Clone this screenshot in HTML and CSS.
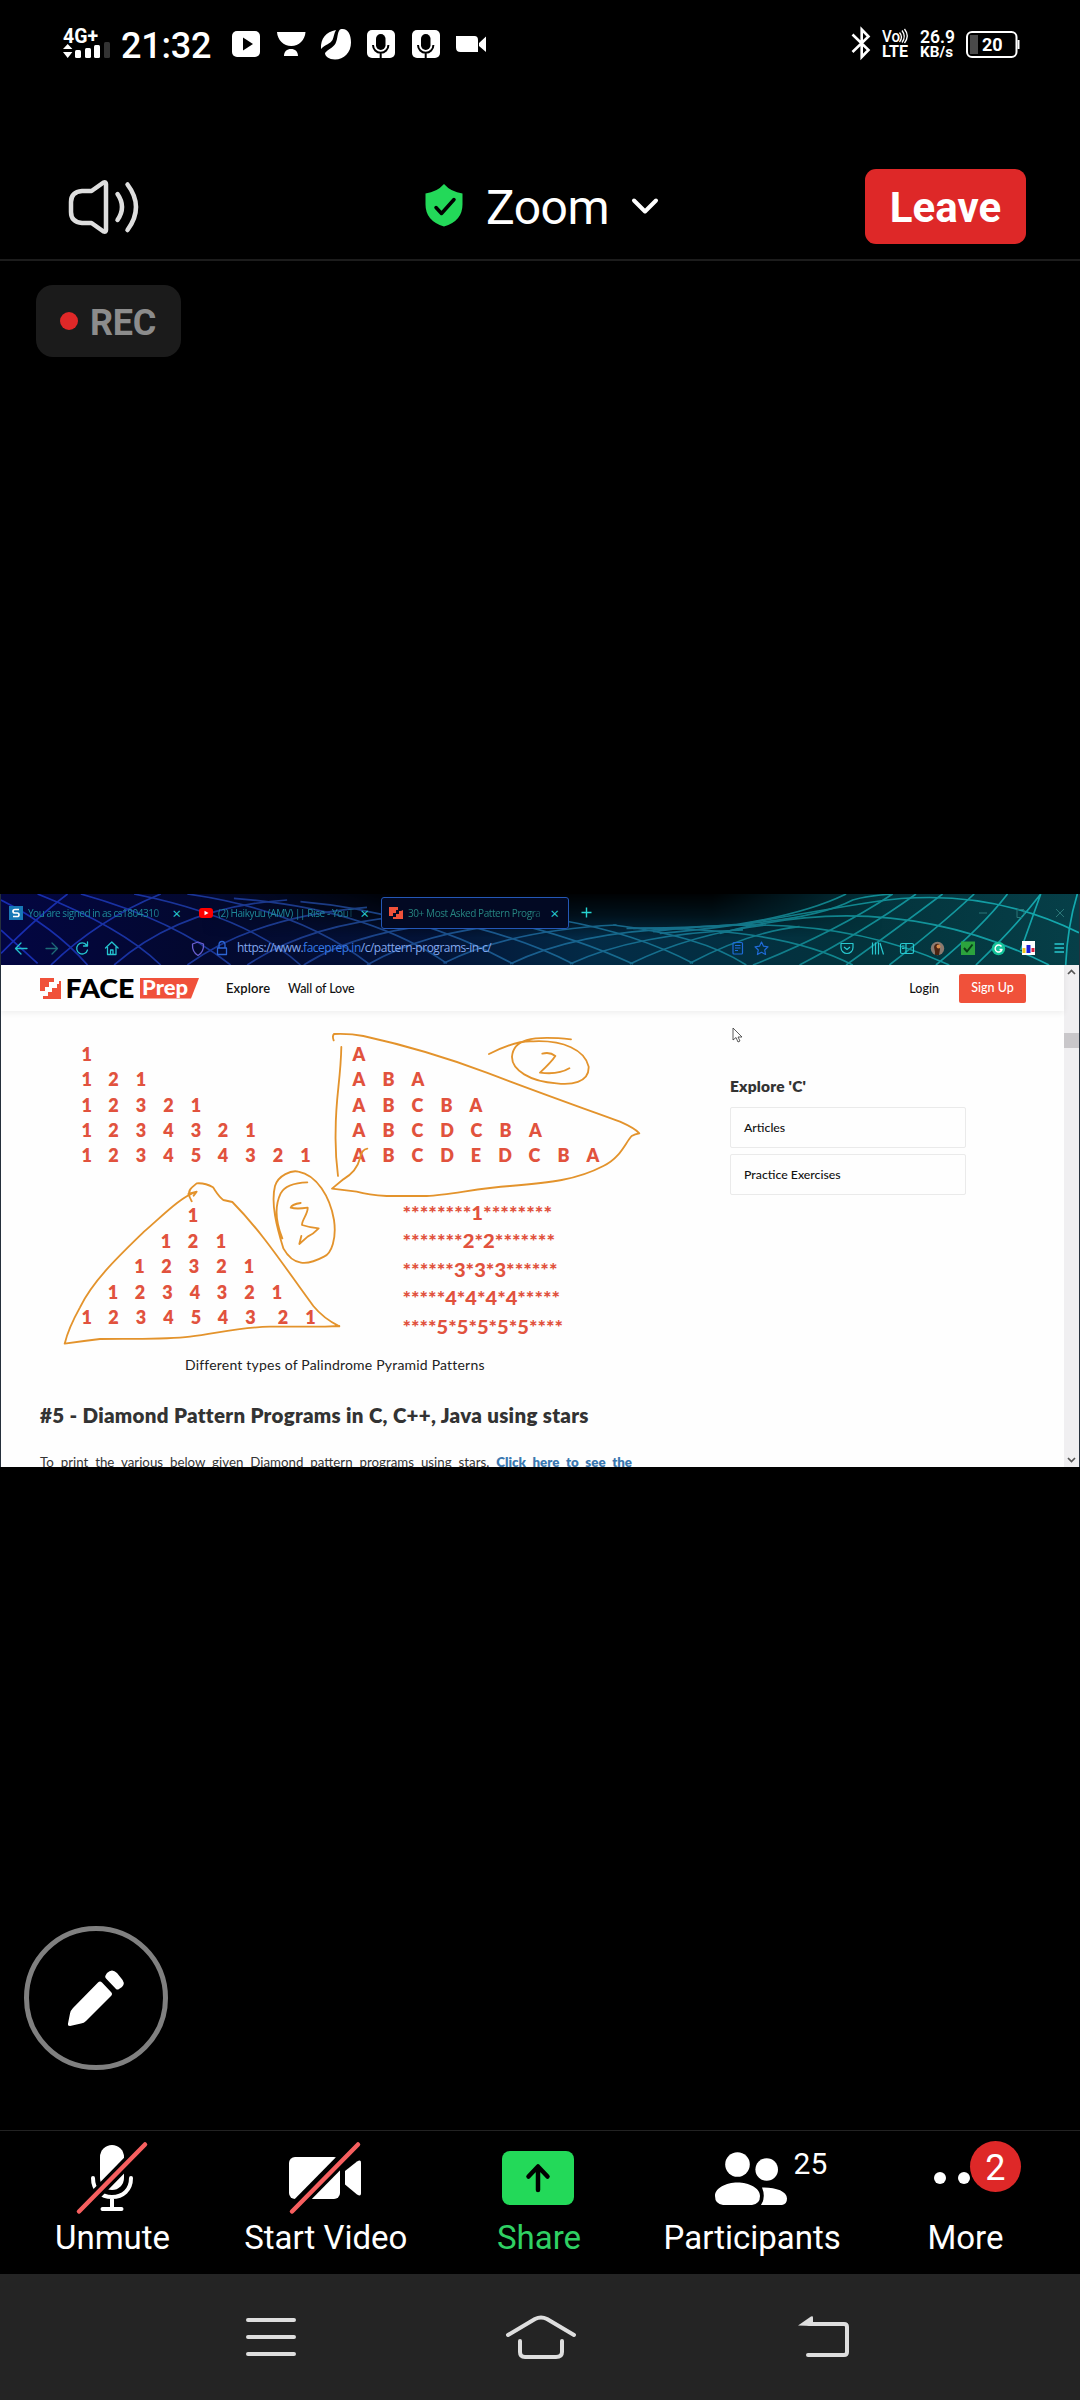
FILE: index.html
```html
<!DOCTYPE html>
<html lang="en">
<head>
<meta charset="utf-8">
<title>Zoom</title>
<link rel="stylesheet" href="styles.css">
</head>
<body>
<div class="statusbar">
  <svg class="signal" width="48" height="36" viewBox="63 24 48 36"><text x="63" y="43" font-size="20" font-weight="700" textLength="35" lengthAdjust="spacingAndGlyphs" fill="#fff">4G+</text><path fill="#fff" d="M63 49l4.700-5 4.700 5zM63 52h9.400l-4.700 6z"/><rect x="75" y="50" width="6" height="8" rx="1.500" fill="#fff"/><rect x="85" y="48" width="6" height="10" rx="1.500" fill="#fff"/><rect x="94" y="45" width="6" height="13" rx="1.500" fill="#fff"/><rect x="104" y="42" width="6" height="16" rx="1.500" fill="#333"/></svg>
  <span class="clock">21:32</span>
  <svg class="notifs" width="256" height="32" viewBox="231 28 256 32">
    <rect x="232" y="31" width="28" height="26" rx="5" fill="#fff"/><path d="M243 37.500l10 6.500-10 6.500z"/>
    <path fill="#fff" d="M277 32h28.500c-.5 8-6.500 14-14.200 14S277.500 40 277 32zM284 56c0-4.500 3-7 7-7s7 2.500 7 7z"/>
    <path fill="#fff" d="M336 30c-10 2-15.500 8-15 19 5-5 9-5 11.500-9 1.500-3 1.500-7 3.500-10z"/><path fill="#fff" d="M340 29.500c7-2 11 4 11 13 0 10-7 17-16 17-6 0-10-3-10-6.500 3-4 8-5 10.500-9.500 2.500-5 1.500-11 4.500-14z"/>
    <g id="micbox"><rect x="367" y="30" width="28" height="28" rx="5" fill="#fff"/><rect x="376" y="34" width="9.500" height="16" rx="4.700"/><path d="M373 45a7.700 7.700 0 0 0 15.400 0M380.700 52v6" fill="none" stroke="#000" stroke-width="2"/></g>
    <use href="#micbox" x="45"/>
    <path fill="#fff" d="M456 36h18.500q3.500 0 3.500 4v12h-17.500q-4.500 0-4.500-4.500zM479 43l7-6.500v15.500l-7-6z"/>
  </svg>
  <div class="status-right">
    <svg width="20" height="36" viewBox="851 26 20 36"><path d="M852.500 34.500l16 15.500-6.800 7V29.500l6.800 7-16 15.500" fill="none" stroke="#fff" stroke-width="2.600"/></svg>
    <svg width="28" height="36" viewBox="880 26 28 36" fill="#fff"><text x="881" y="42" font-size="16" font-weight="500" textLength="18" lengthAdjust="spacingAndGlyphs">Vo</text><text x="881" y="57" font-size="16" font-weight="700" textLength="26" lengthAdjust="spacingAndGlyphs">LTE</text><path d="M898.500 32.500q4 4.500 0 9.500M901 30.500q4.500 6 0 12M903.500 29q5.500 7 0 14" fill="none" stroke="#fff" stroke-width="1.300"/></svg>
    <svg width="37" height="36" viewBox="919 26 37 36" fill="#fff"><text x="920" y="42.500" font-size="18" font-weight="600" textLength="35" lengthAdjust="spacingAndGlyphs">26.9</text><text x="920" y="57" font-size="15.500" font-weight="700" textLength="33" lengthAdjust="spacingAndGlyphs">KB/s</text></svg>
    <svg width="55" height="36" viewBox="966 27 55 36"><rect x="967" y="33" width="49.500" height="25" rx="5" fill="none" stroke="#fff" stroke-width="2"/><rect x="970" y="36" width="8" height="19" fill="#4a4a4a"/><path d="M1018.500 41v9" stroke="#fff" stroke-width="2"/><text x="982" y="52" font-size="18" font-weight="700" fill="#fff">20</text></svg>
  </div>
</div>

<header class="meeting-bar">
  <svg class="speaker" width="72" height="58" viewBox="68 178 72 58" fill="none" stroke="#dedede" stroke-width="4.500" stroke-linecap="round" stroke-linejoin="round"><path d="M82 191h9.500l12-8.500q2.500-1 2.500 1.500v46q0 2.500-2.500 1.500l-12-8.500H82q-11-1-11-11V202q0-10 11-11z"/><path d="M117.500 194q9 13 0 26M127.500 184.500q17 22.500 0 45.500"/></svg>
  <div class="topic">
    <svg width="39" height="44" viewBox="425 185 39 44"><path fill="#23d959" d="M444 185q7 8 18.500 9.500v11q0 16.500-18.500 22-18.500-5.500-18.500-22v-11Q437 193 444 185z"/><path d="M436 208.500l5.500 6 12.500-14" fill="none" stroke="#000" stroke-width="3.500" stroke-linecap="round" stroke-linejoin="round"/></svg>
    <span class="topic-name">Zoom</span>
    <svg width="28" height="18" viewBox="0 0 28 18"><path d="M3 3.500l11 11 11-11" fill="none" stroke="#fff" stroke-width="4" stroke-linecap="round" stroke-linejoin="round"/></svg>
  </div>
  <button class="leave">Leave</button>
</header>

<main class="stage">
  <div class="rec"><i></i><span>REC</span></div>

  <section class="shared">
    <div class="chrome">
      <svg class="mesh" viewBox="0 42 3240 213" preserveAspectRatio="none">
        <defs>
          <linearGradient id="bg" x1="0" x2="1"><stop offset="0" stop-color="#030642"/><stop offset=".18" stop-color="#03082f"/><stop offset=".4" stop-color="#031337"/><stop offset=".55" stop-color="#032b46"/><stop offset=".8" stop-color="#03333c"/><stop offset="1" stop-color="#063f48"/></linearGradient>
          <linearGradient id="ln" gradientUnits="userSpaceOnUse" x1="0" x2="3240" y1="0" y2="0"><stop offset="0" stop-color="#1d36cf"/><stop offset=".3" stop-color="#22489e"/><stop offset=".5" stop-color="#1f6fa2"/><stop offset=".75" stop-color="#14969f"/><stop offset="1" stop-color="#18c6ca"/></linearGradient>
          <linearGradient id="sh" x1="0" x2="0" y1="0" y2="1"><stop offset="0" stop-color="#000" stop-opacity=".95"/><stop offset=".5" stop-color="#000" stop-opacity=".6"/><stop offset="1" stop-color="#000" stop-opacity="0"/></linearGradient>
          <linearGradient id="fd" x1="0" x2="1"><stop offset="0" stop-color="#fff" stop-opacity="0"/><stop offset=".3" stop-color="#fff"/><stop offset=".75" stop-color="#fff"/><stop offset="1" stop-color="#fff" stop-opacity="0"/></linearGradient>
          <mask id="mk"><rect x="600" y="42" width="2050" height="130" fill="url(#fd)"/></mask>
        </defs>
        <rect y="42" width="3240" height="213" fill="url(#bg)"/>
        <rect x="600" y="42" width="2050" height="130" fill="url(#sh)" mask="url(#mk)"/>
        <g id="wires" fill="none" stroke="url(#ln)">
          <path d="M0 150L110 250M0 60Q160 140 260 255M110 42Q360 140 480 255M240 42Q520 120 690 255M400 42Q740 110 900 255M560 42Q900 90 1110 255M700 55Q1100 85 1340 250M900 65Q1250 95 1540 252M1150 95Q1480 130 1720 252M1400 100Q1680 150 1900 252M1680 120Q1910 160 2080 250M1840 135Q2100 165 2240 255"/>
          <path d="M0 220Q110 110 200 42M150 255Q290 120 480 42M340 255Q540 80 860 60M560 255Q760 110 1100 82M740 255Q920 135 1200 110M910 255Q1080 145 1400 125M1100 255Q1300 140 1600 130M1330 250Q1530 150 1850 135M1530 252Q1730 155 2050 145M1710 252Q1910 160 2230 150M1890 252Q2080 160 2300 135M2070 250Q2250 155 2400 140"/>
          <path d="M1880 145Q2400 145 2560 60Q2600 48 2680 42M1980 160Q2360 130 2540 42M2260 255Q2500 160 2680 42M2400 255Q2600 150 2750 42M2540 255Q2700 140 2830 42M2670 255Q2820 140 2925 42M2810 255Q2950 140 3025 42M2930 255Q3050 140 3125 42M3065 210L3125 42M3200 255Q3205 140 3235 42"/>
          <path d="M2240 130Q2500 85 2620 66Q2950 15 3240 158M2160 160Q2680 20 3150 255M1960 155Q2480 85 2850 255M1900 145Q2340 140 2560 255"/>
        </g>
      </svg>

      <div class="tabs">
        <div class="tab tab-first"><svg width="14" height="14" viewBox="0 0 14 14"><rect width="14" height="14" fill="#1778b6"/><path d="M10 3.500H6q-2 0-2 1.700T6 7h2.300q1.700 0 1.700 1.800T8 10.500H4" fill="none" stroke="#fff" stroke-width="1.700"/></svg><span class="tab-title">You are signed in as cs1804310</span><b class="x">×</b></div>
        <div class="tab tab-second"><svg width="14" height="14" viewBox="0 0 14 14"><rect y="2" width="14" height="10" rx="3" fill="#f00"/><path d="M5.500 4.700L9.500 7l-4 2.300z" fill="#fff"/></svg><span class="tab-title">(2) Haikyuu (AMV) || Rise - YouT</span><b class="x">×</b></div>
        <div class="tab tab-active"><svg width="14" height="14" viewBox="0 0 14 14"><path fill="#f0513a" d="M0 1h9v3H7v3H4v3H0zM14 4v9H4v-2h3V8h3V5h2z"/></svg><span class="tab-title">30+ Most Asked Pattern Progra</span><b class="x">×</b></div>
        <svg class="plus" width="11" height="11" viewBox="0 0 11 11"><path d="M5.500.5v10M.5 5.500h10" stroke="#27d5d3" stroke-width="1.400"/></svg>
        <svg class="winctl" width="88" height="12" viewBox="0 0 88 12" fill="none" stroke="#2b7778" stroke-width="1"><path d="M1 6h8M39 2.500h7M39 2.500v8h5M46 3v5M78 2l8 8M86 2l-8 8"/></svg>
      </div>

      <div class="navrow">
        <svg class="navicons" width="230" height="18" viewBox="0 939 230 18" fill="none" stroke="#24c4cf" stroke-width="1.300" stroke-linecap="round" stroke-linejoin="round"><path d="M27 948.500H16M21 943l-5.500 5.500 5.500 5.500"/><path stroke="#1d6b78" d="M46 948.500h11M52 943l5.500 5.500-5.500 5.500"/><path d="M86.500 945a5.500 5.500 0 1 0 1 5M87.500 942v4h-4"/><path d="M105.500 948l6.300-6 6.300 6M107.500 947v7.500h8.500V947M110.500 954v-4h2.500v4"/><path stroke="#6a5fd0" d="M198 942l5.500 2q.5 8-5.500 11.500-6-3.500-5.500-11.500z"/><path stroke="#2c65d4" d="M217.500 948h9v6.500h-9zM219 948v-3a3 3.500 0 0 1 6 0v3"/></svg>
        <span class="url">https://www.<em>faceprep.in</em>/c/pattern-programs-in-c/</span>
        <svg class="extras" width="340" height="18" viewBox="730 939 340 18" fill="none" stroke="#28c8cf" stroke-width="1.200" stroke-linejoin="round"><g stroke="#1f6bd8"><rect x="733" y="942.500" width="9.500" height="11.500" rx="1"/><path d="M735 945.500h5.500M735 948h5.500M735 950.500h3M761.500 942l2 4.200 4.500.6-3.300 3.200.9 4.500-4.100-2.200-4.100 2.200.9-4.500-3.300-3.200 4.500-.6z"/></g><path d="M841 943.500h12v4a6 6 0 0 1-12 0zM844 947l3 2.500 3-2.500M872.500 942.500v12M875.500 942.500v12M878.500 942.500v12M880 943l3.500 11.500"/><rect x="900.500" y="943.500" width="13" height="10" rx="1.500"/><path d="M906 943.500v10M902 946h2.500M902 948.500h2.500"/>
        <g stroke="none"><circle cx="937.500" cy="948.500" r="6.700" fill="#8a7a70"/><path d="M935 955v-3l-1-5q1-4 5-3l1 5-1 6z" fill="#4b2412"/><circle cx="938.500" cy="946.500" r="2" fill="#d58c4d"/><rect x="961" y="941.500" width="14" height="13.500" fill="#2ca33d"/><circle cx="998.500" cy="948.500" r="6.700" fill="#15c39a"/><rect x="1022" y="941" width="13" height="14" fill="#fff"/><path d="M1022.500 948h3v5h-3z" fill="#f3c51c"/><path d="M1026.500 945h4v8h-4z" fill="#1e20d8"/><path d="M1031.500 948h3v4h-3z" fill="#dd2240"/></g><path d="M964 948l3 3.500 5.500-7" stroke="#083d18" stroke-width="2"/><path d="M1001.500 946.500a3.500 3.500 0 1 0 .5 3h-2.500" stroke="#fff" stroke-width="1.400"/><path d="M1054.500 944h9.500M1054.500 948h9.500M1054.500 952h9.500" stroke-width="1.500"/></svg>
      </div>
    </div>

    <div class="page">
      <div class="page-main">
        <div class="site-head">
          <svg class="logo" width="162" height="30" viewBox="39 973 162 30"><path fill="#f0513a" d="M40 978h14v4h-5v5h-4v4h-5zM61 981v18H43v-3h5v-4h4v-4h5v-4h2v-3z"/><text x="65.500" y="998" font-family="Lato" font-size="27" font-weight="900" textLength="69" lengthAdjust="spacingAndGlyphs">FACE</text><path fill="#f0513a" d="M140 978h59l-8 20.500h-51z"/><text x="142" y="995" font-family="Lato" font-size="20" font-weight="900" fill="#fff" textLength="46" lengthAdjust="spacingAndGlyphs">Prep</text></svg>
          <a class="link-explore">Explore</a><a class="link-wall">Wall of Love</a>
          <a class="login">Login</a><a class="signup">Sign Up</a>
        </div>
        <div class="columns">
          <article>
            <svg class="figure" width="660" height="330" viewBox="0 1020 660 330">
              <g class="glyphs">
                <text y="1060.500" x="86.700">1</text>
                <text y="1086" x="86.700 113.500 141">121</text>
                <text y="1111.500" x="86.700 113.500 141 168.500 196">12321</text>
                <text y="1137" x="86.700 113.500 141 168.500 196 223 250.500">1234321</text>
                <text y="1162.300" x="86.700 113.500 141 168.500 196 223 250.500 278 305.500">123454321</text>
                <text y="1060.500" x="359">A</text>
                <text y="1086" x="359 388.500 418">ABA</text>
                <text y="1111.500" x="359 388.500 417.500 446.500 476">ABCBA</text>
                <text y="1137" x="359 388.500 417.500 447 476.500 505.500 535.500">ABCDCBA</text>
                <text y="1162.300" x="359 388.500 417.500 447 476 505 534.500 563.500 593">ABCDEDCBA</text>
                <text y="1222" x="193">1</text>
                <text y="1247.500" x="166 193 221">121</text>
                <text y="1273" x="139.500 166.500 194 221.500 249">12321</text>
                <text y="1298.500" x="113 140 167.500 195 222 249.500 277">1234321</text>
                <text y="1324" x="86.700 113.500 141 168.500 196 223 250.500 283 310.500">123454321</text>
              </g>
              <g class="stars">
                <text x="402.500" y="1219.500" textLength="149.500" lengthAdjust="spacingAndGlyphs">********1********</text>
                <text x="402.500" y="1248" textLength="152.500" lengthAdjust="spacingAndGlyphs">*******2*2*******</text>
                <text x="402.500" y="1276.500" textLength="155" lengthAdjust="spacingAndGlyphs">******3*3*3******</text>
                <text x="402.500" y="1305" textLength="157.500" lengthAdjust="spacingAndGlyphs">*****4*4*4*4*****</text>
                <text x="402.500" y="1333.500" textLength="160.500" lengthAdjust="spacingAndGlyphs">****5*5*5*5*5****</text>
              </g>
              <g class="ink">
                <path transform="translate(30 1020) scale(.33333)" d="M485 544C474 526 474 512 486 502L500 490Q525 488 549 502C558 515 566 530 580 540L607 546C700 640 770 750 850 858Q880 895 928 919M475 522L500 515L491 527M500 515C450 532 400 585 342 635C270 705 190 780 150 862Q115 925 104 971Q160 963 210 957C300 955 400 960 480 950C570 938 630 922 720 920L885 920L928 918M832 487C800 488 765 495 752 520C735 555 735 600 757 655M760 685C740 620 722 550 735 498C745 465 785 450 805 455C860 465 900 530 912 600C920 655 905 700 882 710C830 738 790 738 760 685M812 549Q785 553 782 563Q800 568 833 563C835 580 815 600 816 615Q840 623 866 625Q850 642 833 650L808 672L814 648"/>
                <path transform="translate(310 1020) scale(.33333)" d="M71 61Q66 48 72 42Q120 40 160 48C260 70 390 105 530 158C680 215 820 265 930 305Q975 325 988 340Q975 342 965 348C945 370 930 415 880 438C800 480 720 488 600 498C500 505 420 525 350 528L230 528Q175 525 140 515L66 506L100 478Q140 455 150 415Q155 388 172 386M94 81C92 180 77 230 77 330Q75 400 84 468M537 102Q620 60 670 64C760 60 825 90 836 140C838 190 780 195 740 190C660 185 605 150 606 110C610 60 660 45 783 58M697 101Q720 95 736 108Q725 125 690 158Q745 165 778 145"/>
              </g>
            </svg>
            <p class="caption">Different types of Palindrome Pyramid Patterns</p>
            <h2>#5 - Diamond Pattern Programs in C, C++, Java using stars</h2>
            <p class="para">To print the various below given Diamond pattern programs using stars. <a>Click here to see the</a></p>
          </article>
          <aside>
            <h3>Explore 'C'</h3>
            <a class="card">Articles</a>
            <a class="card">Practice Exercises</a>
          </aside>
        </div>
      </div>
      <div class="scrollbar">
        <svg width="9" height="6" viewBox="0 0 9 6"><path d="M1 5l3.500-3.500L8 5" fill="none" stroke="#555" stroke-width="1.700"/></svg>
        <i></i>
        <svg width="9" height="6" viewBox="0 0 9 6"><path d="M1 1l3.500 3.500L8 1" fill="none" stroke="#555" stroke-width="1.700"/></svg>
      </div>
      <svg class="cursor" width="12" height="17" viewBox="0 0 12 17"><path d="M1 1v12l3-2.500 2 4.500 2-1-2-4h4z" fill="#fff" stroke="#333" stroke-width=".8"/></svg>
    </div>
  </section>

  <button class="annotate"><svg width="60" height="60" viewBox="67 1967 60 60" fill="#fff"><path d="M99 1981.500q2-2 4 0l9 9.500q2 2 0 4l-25 25q-2 2-5 2.500l-11 2.500q-2.500 0-2-2.500l2-10q.5-3 3-5.500zM108 1972q5-5 10 0l4 5q5 5 1 9l-3 2q-1.500 1-3 0l-10-10.500q-1.500-1.500-.5-3z"/></svg></button>
</main>

<nav class="toolbar">
  <a class="tool"><svg width="76" height="74" viewBox="74 2141 76 74"><rect x="100" y="2145" width="24" height="45" rx="12" fill="#fff"/><path d="M93 2178c0 12 8 19 19 19s19-7 19-19M112 2197v12M102.500 2209h19" fill="none" stroke="#fff" stroke-width="4" stroke-linecap="round"/><path d="M77 2209.500L143 2142M81 2214L147 2146.500" stroke="#000" stroke-width="5"/><path d="M79 2211.500L145 2144.500" stroke="#f65f5f" stroke-width="4.500" stroke-linecap="round"/></svg><span>Unmute</span></a>
  <a class="tool"><svg width="76" height="74" viewBox="287 2141 76 74"><rect x="289" y="2157" width="51" height="42" rx="6" fill="#fff"/><path fill="#fff" d="M345 2171l12-9.500q4-2.500 4 1v31q0 3.500-4 1l-12-10z"/><path d="M288.500 2211L355 2143.500" stroke="#000" stroke-width="8"/><path d="M295 2212.500L360.500 2146" stroke="#000" stroke-width="5"/><path d="M292 2211.500L358 2144.500" stroke="#f65f5f" stroke-width="4.500" stroke-linecap="round"/></svg><span>Start Video</span></a>
  <a class="tool share"><svg width="76" height="74" viewBox="500 2141 76 74"><rect x="502" y="2151" width="72" height="54" rx="8" fill="#23d959"/><path d="M538 2190v-22M528.500 2176.500l9.500-10 9.500 10" fill="none" stroke="#000" stroke-width="4.500" stroke-linecap="round" stroke-linejoin="round"/></svg><span>Share</span></a>
  <a class="tool"><svg width="76" height="74" viewBox="713 2141 76 74" fill="#fff"><circle cx="737.500" cy="2164.500" r="12.300"/><circle cx="766.700" cy="2169.500" r="11.300"/><path d="M723 2205q-8-1-8-9c0-8 11-13.500 22.500-13.500S760 2188 760 2196q0 8-8 9zM761 2205q5-8 1-17.500c13-.5 25 3.500 25 11q0 5.500-5 6.500z"/></svg><b class="count">25</b><span>Participants</span></a>
  <a class="tool"><svg width="76" height="74" viewBox="926 2141 76 74" fill="#fff"><circle cx="940" cy="2178" r="6"/><circle cx="964" cy="2178" r="6"/><circle cx="988" cy="2178" r="6"/></svg><b class="badge">2</b><span>More</span></a>
</nav>

<footer class="sysnav">
  <svg width="52" height="44" viewBox="245 2315 52 44"><path d="M248 2320h46M248 2337h46M248 2354h46" stroke="#dedede" stroke-width="4" stroke-linecap="round"/></svg>
  <svg width="74" height="48" viewBox="504 2312 74 48" fill="none" stroke="#dedede" stroke-width="4" stroke-linecap="round" stroke-linejoin="round"><path d="M508 2334l27-16q6-3 12 0l27 16M520 2340v11q0 5 5 5h31q6 0 6-5v-11"/></svg>
  <svg width="54" height="46" viewBox="797 2313 54 46"><path d="M809 2323h35q3 0 3 3v25q0 3-3 3h-36" fill="none" stroke="#dedede" stroke-width="4" stroke-linecap="round"/><path fill="#dedede" d="M798 2324.500l13-9q2-1 2 1v8.500z"/></svg>
</footer>
</body>
</html>
```
FILE: styles.css
```css
* { box-sizing: border-box; margin: 0; padding: 0; }
body { width: 1080px; height: 2400px; overflow: hidden; background: #000; color: #fff; font-family: Roboto, sans-serif; display: flex; flex-direction: column; }
svg { display: block; flex: none; overflow: visible; }
button { border: 0; color: inherit; font-family: inherit; }
a { color: inherit; text-decoration: none; }

.statusbar { height: 88px; display: flex; align-items: center; padding: 0 59px 0 63px; }
.signal { margin-right: 10px; margin-top: -4px; }
.clock { font-size: 36px; font-weight: 500; line-height: 42px; width: 110px; margin-top: 4px; letter-spacing: -.2px; }
.status-right { margin-left: auto; display: flex; gap: 10px; align-items: center; }

.meeting-bar { height: 173px; padding: 65px 54px 0 68px; border-bottom: 2px solid #1c1c1c; display: grid; grid-template-columns: 1fr auto 1fr; align-items: center; }
.speaker { margin-top: 2px; }
.topic { display: flex; align-items: center; position: relative; right: 5px; }
.topic-name { font-size: 48px; line-height: 56px; margin: 3px 22px 0 22px; letter-spacing: -.5px; }
.leave { justify-self: end; width: 161px; height: 75px; border-radius: 11px; background: #de2828; font-size: 42px; font-weight: 700; padding-top: 3px; }

.stage { flex: 1; display: flex; flex-direction: column; align-items: flex-start; }
.rec { margin: 24px 0 0 36px; width: 145px; height: 72px; border-radius: 17px; background: #1b1b1b; color: #8c8c8c; display: flex; align-items: center; gap: 12px; padding-left: 24px; font-size: 36px; font-weight: 700; letter-spacing: -.3px; }
.rec span { padding-top: 3px; }
.rec i { width: 18px; height: 18px; border-radius: 50%; background: #e02828; }

.shared { width: 1080px; height: 573px; margin-top: 537px; background: #fefefe; overflow: hidden; color: #111; border-left: 1px solid #26303c; border-right: 1px solid #26303c; font-family: Lato, sans-serif; }
.chrome { height: 71px; position: relative; font-family: "Open Sans", sans-serif; border-bottom: 1px solid #9aa6b8; }
.mesh { position: absolute; inset: 0; width: 1078px; height: 71px; overflow: hidden; }
.mesh g { stroke-width: 5; opacity: .8; }
.tabs { position: relative; height: 37px; display: flex; align-items: center; }
.tab { display: flex; align-items: center; height: 32px; font-size: 10px; color: #1e8a9a; }
.tab-title { flex: 1; margin-left: 5px; overflow: hidden; white-space: nowrap; -webkit-mask-image: linear-gradient(90deg, #000 88%, transparent); mask-image: linear-gradient(90deg, #000 88%, transparent); }
.tab .x { width: 11px; text-align: center; font-size: 15px; line-height: 14px; font-weight: 400; color: #29cdd0; }
.tab-first { width: 173px; margin-left: 8px; letter-spacing: -.48px; }
.tab-second { width: 171px; margin-left: 17px; letter-spacing: -.42px; }
.tab-active { width: 188px; margin-left: 11px; padding: 0 8px 0 7px; border: 1px solid #2457b6; border-radius: 3px; background: #020923; color: #268480; letter-spacing: -.42px; }
.plus { margin-left: 12px; }
.winctl { margin-left: auto; margin-right: 13px; }
.navrow { position: relative; height: 34px; display: flex; align-items: center; }
.navicons { margin-left: -1px; }
.url { margin-left: 7px; font-size: 12px; letter-spacing: -.49px; color: #82a7ee; white-space: nowrap; line-height: 18px; width: 260px; }
.url em { font-style: normal; color: #3579e6; }
.extras { margin-left: auto; margin-right: 9px; }

.page { position: relative; display: flex; height: 502px; }
.page-main { width: 1063px; }
.site-head { height: 46px; display: flex; align-items: center; padding: 0 38px; box-shadow: 0 2px 6px #0001; font-size: 12.500px; font-weight: 500; white-space: nowrap; position: relative; }
.link-explore { margin-left: 25px; width: 62px; font-size: 13px; font-weight: 600; letter-spacing: .1px; }
.link-wall { letter-spacing: -.1px; }
.login { margin-left: auto; margin-right: 20px; }
.signup { width: 67px; height: 29px; background: #f0513a; color: #fff; border-radius: 2px; text-align: center; line-height: 28px; }
.columns { display: flex; }
article { width: 728px; }
.figure { margin: 9px 0 0 -1px; }
.glyphs text, .stars text { font: 900 18px Lato, sans-serif; fill: #e1523d; }
.glyphs text { text-anchor: middle; font-weight: 800; }
.ink path { fill: none; stroke: #e3932c; stroke-width: 5.500; stroke-linecap: round; stroke-linejoin: round; }
.caption { margin: 5px 0 0 184px; font-size: 14px; line-height: 20px; white-space: nowrap; letter-spacing: .2px; color: #222; }
h2 { margin: 27px 0 0 39px; font-size: 20.500px; line-height: 26px; font-weight: 800; color: #333; white-space: nowrap; letter-spacing: .3px; }
.para { margin: 24px 0 0 39px; width: 592px; font-size: 13.300px; line-height: 20px; color: #333; text-align: justify; text-align-last: justify; white-space: nowrap; }
.para a { font-weight: 800; color: #3b78b0; }
aside { width: 236px; padding-top: 65px; margin-left: 1px; }
h3 { font-size: 15.500px; line-height: 20px; color: #333; font-weight: 800; letter-spacing: .2px; }
.card { display: flex; align-items: center; height: 41px; margin-bottom: 6px; padding-left: 13px; border: 1px solid #eaeaea; border-radius: 2px; font-size: 12.300px; font-weight: 500; }
h3 + .card { margin-top: 11px; }
.scrollbar { width: 15px; background: #f0eff1; display: flex; flex-direction: column; align-items: center; padding: 4px 0; }
.scrollbar i { width: 15px; height: 15px; background: #c9c7ca; margin: 58px 0 auto; }
.cursor { position: absolute; left: 731px; top: 62px; }

.annotate { margin: 459px 0 0 24px; width: 144px; height: 144px; border: 5px solid #808080; border-radius: 50%; background: #000; display: flex; align-items: center; justify-content: center; }

.toolbar { height: 144px; border-top: 1px solid #222; padding: 11px 8px 0 6px; display: grid; grid-template-columns: repeat(5, 1fr); }
.tool { position: relative; display: flex; flex-direction: column; align-items: center; font-size: 33px; line-height: 40px; white-space: nowrap; }
.tool span { margin-top: 3px; }
.tool svg { margin-left: -2px; margin-top: -1px; }
.share { color: #2fd063; }
.count { position: absolute; left: 148px; top: 2px; font-size: 30px; font-weight: 400; }
.badge { position: absolute; left: 111px; top: -1px; width: 51px; height: 51px; border-radius: 50%; background: #de2828; font-size: 36px; line-height: 54px; font-weight: 400; text-align: center; }

.sysnav { height: 126px; background: #242424; display: flex; align-items: center; padding-left: 245px; }
.sysnav svg:nth-child(2) { margin-left: 207px; }
.sysnav svg:nth-child(3) { margin-left: 219px; }
```
